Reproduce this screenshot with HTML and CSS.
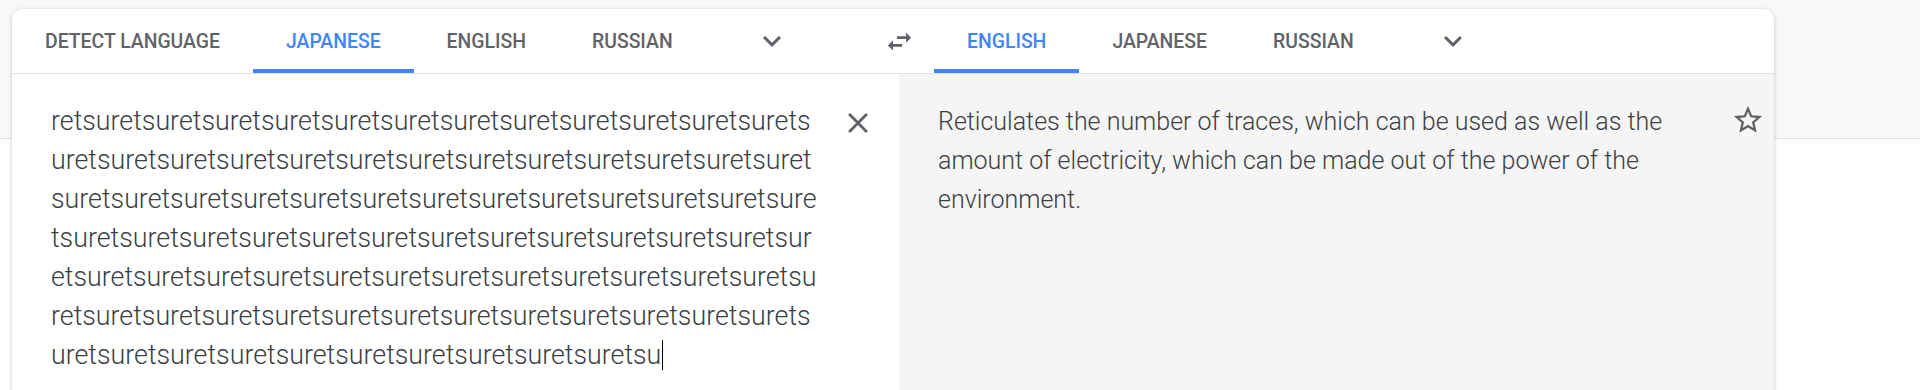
FILE: index.html
```html
<!DOCTYPE html>
<html lang="en">
  <head>
    <meta charset="UTF-8" />
    <meta name="viewport" content="width=device-width, initial-scale=1.0" />
    <title>Translate</title>
    <link rel="stylesheet" href="styles.css">
  </head>

  <body>
    <div class="page">
      <section class="card">
        <header class="langbar">
          <nav class="langs">
            <button class="tab">Detect language</button>
            <button class="tab valgt">Japanese</button>
            <button class="tab">English</button>
            <button class="tab">Russian</button>
            <button class="more">
              <svg viewBox="0 0 24 24" width="36" height="36"><path d="M16.59 8.59L12 13.17 7.41 8.59 6 10l6 6 6-6z" /></svg>
            </button>
          </nav>
          <button class="swap">
            <svg viewBox="0 0 24 24" width="31" height="31"><path d="M6.99 11L3 15l3.99 4v-3H14v-2H6.99v-3zM21 9l-3.99-4v3H10v2h7.01v3L21 9z" /></svg>
          </button>
          <nav class="langs">
            <button class="tab valgt">English</button>
            <button class="tab">Japanese</button>
            <button class="tab">Russian</button>
            <button class="more">
              <svg viewBox="0 0 24 24" width="36" height="36"><path d="M16.59 8.59L12 13.17 7.41 8.59 6 10l6 6 6-6z" /></svg>
            </button>
          </nav>
        </header>

        <div class="panes">
          <div class="pane kilde">
            <div class="tekst">retsuretsuretsuretsuretsu<!--
            -->retsuretsuretsuretsuretsu<!--
            -->retsuretsuretsuretsuretsu<!--
            -->retsuretsuretsuretsuretsu<!--
            -->retsuretsuretsuretsuretsu<!--
            -->retsuretsuretsuretsuretsu<!--
            -->retsuretsuretsuretsuretsu<!--
            -->retsuretsuretsuretsuretsu<!--
            -->retsuretsuretsuretsuretsu<!--
            -->retsuretsuretsuretsuretsu<!--
            -->retsuretsuretsuretsuretsu<!--
            -->retsuretsuretsuretsuretsu<!--
            -->retsuretsuretsuretsuretsu<!--
            -->retsuretsuretsuretsuretsu<!--
            -->retsuretsuretsuretsuretsu<!--
            -->retsuretsuretsuretsuretsu<!--
            -->retsuretsuretsuretsuretsu<!--
            -->retsuretsu<span class="caret"></span></div>
            <button class="ikon ryd">
              <svg viewBox="0 0 24 24" width="34" height="34"><path d="M19 6.41L17.59 5 12 10.59 6.41 5 5 6.41 10.59 12 5 17.59 6.41 19 12 13.41 17.59 19 19 17.59 13.41 12z" /></svg>
            </button>
          </div>
          <div class="pane resultat">
            <div class="tekst">Reticulates the number of traces, which can be used as well as the amount of electricity, which can be made out of the power of the environment.</div>
            <button class="ikon stjerne">
              <svg viewBox="0 0 24 24" width="34" height="34"><path d="M22 9.24l-7.19-.62L12 2 9.19 8.63 2 9.24l5.46 4.73L5.82 21 12 17.27 18.18 21l-1.63-7.03L22 9.24zM12 15.4l-3.76 2.27 1-4.28-3.32-2.88 4.38-.38L12 6.1l1.71 4.04 4.38.38-3.32 2.88 1 4.28L12 15.4z" /></svg>
            </button>
          </div>
        </div>
      </section>
    </div>
  </body>
</html>
```

FILE: styles.css
```css
body {
  margin: 0;
  font-family: Roboto, "Liberation Sans", sans-serif;
  background-color: #fff;
  overflow: hidden;
}

.page {
  padding: 9px 0 0 12px;
  background: linear-gradient(#f8f8f8 138px, #e3e3e3 138px, #e3e3e3 139px, #fff 139px);
}

.card {
  width: 1762px;
  min-height: 400px;
  background-color: #fff;
  border-radius: 10px 10px 0 0;
  box-shadow: 0 1px 4px rgba(0, 0, 0, 0.22);
  overflow: hidden;
}

button {
  font-family: inherit;
  border: none;
  background: none;
  padding: 0;
  cursor: pointer;
}

svg {
  display: block;
  fill: #5f6368;
}

.langbar {
  display: grid;
  grid-template-columns: 852px 70px 1fr;
  height: 64px;
  border-bottom: 1px solid #e0e0e0;
}

.langs {
  display: flex;
  align-items: stretch;
}

.tab {
  padding: 0 33px;
  font-size: 19.4px;
  font-weight: 500;
  text-transform: uppercase;
  color: #5f6368;
  border-bottom: 4px solid transparent;
  border-top: 4px solid transparent;
}

.tab.valgt {
  color: #4285f4;
  border-bottom-color: #4285f4;
}

.more {
  width: 48px;
  margin-left: 42px;
  display: flex;
  align-items: center;
  justify-content: center;
}

.swap {
  display: flex;
  align-items: center;
  justify-content: center;
}

.panes {
  display: grid;
  grid-template-columns: 887px 1fr;
  min-height: 340px;
}

.pane {
  display: flex;
  align-items: flex-start;
  padding-top: 28px;
  padding-left: 39px;
}

.resultat {
  background-color: #f5f5f5;
}

.tekst {
  flex: 1;
  color: #3c4043;
  font-size: 25px;
  font-weight: 300;
  line-height: 39px;
}

.kilde .tekst {
  font-size: 26.8px;
  word-break: break-all;
}

.caret {
  display: inline-block;
  width: 1px;
  height: 30px;
  margin-left: 1px;
  vertical-align: -6px;
  background-color: #000;
}

.ikon {
  height: 39px;
  display: flex;
  align-items: center;
  justify-content: center;
  margin-top: 1px;
}

.ryd {
  width: 74px;
  margin-right: 4px;
}

.stjerne {
  width: 52px;
  margin-top: -2px;
}
```
